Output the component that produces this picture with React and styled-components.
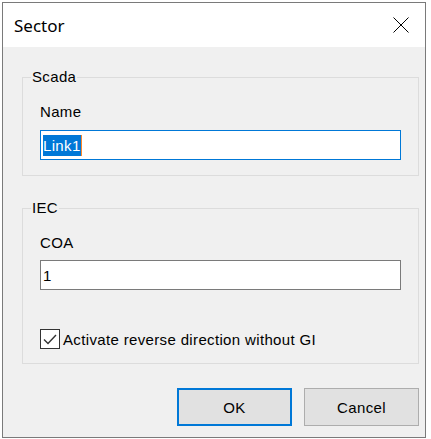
import styled, { createGlobalStyle } from "styled-components";

const GlobalStyle = createGlobalStyle`
  body {
    margin: 0;
    background: #fff;
    font-family: "Liberation Sans", Arial, sans-serif;
    font-size: 15px;
    letter-spacing: 0.35px;
    color: #000;
  }
`;

const Page = styled.div`
  padding: 2px 0 0 2px;
`;

const Window = styled.div`
  width: 424px;
  height: 436px;
  box-sizing: border-box;
  border: 1px solid #7a7a7a;
  background: #f0f0f0;
  display: flex;
  flex-direction: column;
`;

const TitleBar = styled.div`
  height: 44px;
  flex-shrink: 0;
  background: #fff;
  display: flex;
  align-items: center;
  justify-content: space-between;
  padding-left: 11px;
`;

const Title = styled.span`
  font-family: "Noto Sans", "Open Sans", sans-serif;
  font-size: 17px;
  letter-spacing: 0;
  color: #000;
`;

const CloseButton = styled.div`
  width: 48px;
  height: 44px;
  display: flex;
  align-items: center;
  justify-content: center;
`;

const Body = styled.div`
  flex: 1;
  display: flex;
  flex-direction: column;
  padding: 21px 6px 10px 19px;
`;

const GroupBox = styled.fieldset`
  margin: ${(p) => p.$top || 0}px 0 0;
  padding: 0 17px ${(p) => p.$bottom}px;
  border: 1px solid #dcdcdc;
  min-width: 0;
  display: flex;
  flex-direction: column;
`;

const Legend = styled.legend`
  margin-left: -9px;
  padding: 0 1px;
  font-size: 15px;
  line-height: 18px;
`;

const Label = styled.div`
  margin-top: 17px;
  line-height: 18px;
`;

const TextBox = styled.div`
  margin-top: ${(p) => p.$top}px;
  height: 30px;
  box-sizing: border-box;
  border: 1px solid ${(p) => (p.$focused ? "#0078d7" : "#7a7a7a")};
  background: #fff;
  display: flex;
  align-items: center;
  padding-left: 2px;
`;

const Selected = styled.span`
  background: #0078d7;
  color: #fff;
  line-height: 21px;
`;

const Caret = styled.span`
  width: 1px;
  height: 21px;
  background: #ff8728;
`;

const CheckRow = styled.div`
  margin-top: 39px;
  display: flex;
  align-items: center;
  gap: 3px;
  height: 20px;
`;

const CheckBox = styled.div`
  width: 20px;
  height: 20px;
  box-sizing: border-box;
  border: 1px solid #333;
  background: #fff;
  display: flex;
  align-items: center;
  justify-content: center;
`;

const ButtonRow = styled.div`
  margin-top: 24px;
  display: flex;
  justify-content: flex-end;
  gap: 12px;
`;

const Button = styled.div`
  width: 115px;
  height: 38px;
  box-sizing: border-box;
  background: #e1e1e1;
  border: ${(p) => (p.$default ? "2px solid #0078d7" : "1px solid #adadad")};
  display: flex;
  align-items: center;
  justify-content: center;
  font-size: 15px;
`;

export default function App() {
  return (
    <Page>
      <GlobalStyle />
      <Window>
        <TitleBar>
          <Title>Sector</Title>
          <CloseButton>
            <svg width="16" height="16" viewBox="0 0 16 16">
              <path d="M0.5 0.5 L15.5 15.5 M15.5 0.5 L0.5 15.5" stroke="#000" strokeWidth="1" fill="none" />
            </svg>
          </CloseButton>
        </TitleBar>
        <Body>
          <GroupBox $bottom={15}>
            <Legend>Scada</Legend>
            <Label>Name</Label>
            <TextBox $top={9} $focused>
              <Selected>Link1</Selected>
              <Caret />
            </TextBox>
          </GroupBox>
          <GroupBox $top={23} $bottom={14}>
            <Legend>IEC</Legend>
            <Label>COA</Label>
            <TextBox $top={8}>1</TextBox>
            <CheckRow>
              <CheckBox>
                <svg width="18" height="18" viewBox="0 0 18 18">
                  <polyline points="3,9.5 7,13.5 15,5" stroke="#333" strokeWidth="1.4" fill="none" />
                </svg>
              </CheckBox>
              <span>Activate reverse direction without GI</span>
            </CheckRow>
          </GroupBox>
          <ButtonRow>
            <Button $default>OK</Button>
            <Button>Cancel</Button>
          </ButtonRow>
        </Body>
      </Window>
    </Page>
  );
}
